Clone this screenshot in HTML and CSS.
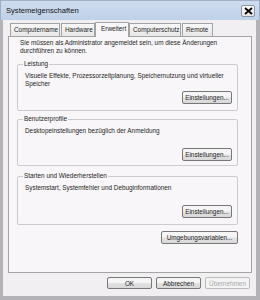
FILE: index.html
```html
<!DOCTYPE html>
<html lang="de">

<head>
    <meta charset="UTF-8">
    <title>Systemeigenschaften</title>
    <link rel="stylesheet" href="styles.css">
</head>

<body>
    <div class="window">
        <div class="titlebar">
            <span class="title">Systemeigenschaften</span>
            <span class="close">
                <svg width="9" height="8" viewBox="0 0 9 8">
                    <path d="M1 1 L8 7 M8 1 L1 7" stroke="#000" stroke-width="1.8" fill="none" />
                </svg>
            </span>
        </div>

        <div class="content">
            <ul class="tabs">
                <li class="t1">Computername</li>
                <li class="t2">Hardware</li>
                <li class="t3 current">Erweitert</li>
                <li class="t4">Computerschutz</li>
                <li class="t5">Remote</li>
            </ul>

            <div class="panel">
                <p class="intro">Sie müssen als Administrator angemeldet sein, um diese Änderungen<br>durchführen zu können.</p>

                <fieldset class="group perf">
                    <legend>Leistung</legend>
                    <p>Visuelle Effekte, Prozessorzeitplanung, Speichernutzung und virtueller<br>Speicher</p>
                    <div class="row"><button>Einstellungen...</button></div>
                </fieldset>

                <fieldset class="group profile">
                    <legend>Benutzerprofile</legend>
                    <p>Desktopeinstellungen bezüglich der Anmeldung</p>
                    <div class="row"><button>Einstellungen...</button></div>
                </fieldset>

                <fieldset class="group start">
                    <legend>Starten und Wiederherstellen</legend>
                    <p>Systemstart, Systemfehler und Debuginformationen</p>
                    <div class="row"><button>Einstellungen...</button></div>
                </fieldset>

                <div class="env"><button>Umgebungsvariablen...</button></div>
            </div>

            <div class="actions">
                <button>OK</button>
                <button>Abbrechen</button>
                <button disabled>Übernehmen</button>
            </div>
        </div>
    </div>
</body>

</html>
```

FILE: styles.css
```css
* {
    margin: 0;
    padding: 0;
    box-sizing: border-box;
}

ul {
    list-style: none;
}

body {
    width: 260px;
    height: 300px;
    font-family: "Liberation Sans", Arial, sans-serif;
    font-size: 6.4px;
    color: #1e1e1e;
    background: #b3b3b7;
}

.window {
    width: 260px;
    height: 300px;
    display: flex;
    flex-direction: column;
    background: #b3b3b7;
}

.titlebar {
    height: 20px;
    display: flex;
    align-items: center;
    justify-content: space-between;
    padding: 0 4px 0 5px;
    background: linear-gradient(#cfdcee, #bfd1e8);
    border: 1px solid #9fb0c6;
    border-bottom: none;
}

.title {
    font-size: 7.6px;
    color: #111;
}

.close {
    width: 14px;
    height: 12px;
    display: flex;
    align-items: center;
    justify-content: center;
    background: linear-gradient(#fbfbfb, #e4e6ea);
    border: 1px solid #8895a6;
    border-radius: 2px;
}

.content {
    flex: 1;
    margin: 0 4px 4px 3px;
    padding: 2px 4px 0 5px;
    background: #f1eff1;
    display: flex;
    flex-direction: column;
}

.tabs {
    display: flex;
    height: 14px;
    align-items: flex-end;
    padding-left: 2px;
    position: relative;
    z-index: 1;
}

.tabs li {
    height: 13px;
    line-height: 12px;
    padding: 0 3px;
    border: 1px solid #a3a3a3;
    border-bottom: none;
    background: linear-gradient(#f7f7f7, #e8e8e8);
    margin-right: 1px;
    white-space: nowrap;
}

.tabs .t1 {
    width: 50px;
}

.tabs .t2 {
    width: 34px;
}

.tabs .t3 {
    width: 34px;
}

.tabs .t4 {
    width: 52px;
}

.tabs .t5 {
    width: 31px;
}

.tabs .current {
    height: 15px;
    line-height: 12px;
    margin: 0 0 -1px -1px;
    background: #f8f6f8;
    padding-left: 5px;
}

.panel {
    height: 237px;
    border: 1px solid #a4a4a4;
    background: #f8f6f8;
    padding: 2px 13px 0 8px;
}

.intro {
    line-height: 8px;
    padding-left: 3px;
    margin-bottom: 5px;
}

.group {
    border: 1px solid #cdcacd;
    border-radius: 2px;
    padding: 0 5px 0 7px;
}

.group legend {
    padding: 0 1px;
    margin-left: -2px;
    line-height: 8px;
}

.group p {
    line-height: 8px;
    margin-top: 4px;
}

.group .row {
    display: flex;
    justify-content: flex-end;
}

.perf {
    margin-bottom: 4px;
}

.perf .row {
    margin: 3px 0 6px;
}

.profile {
    margin-bottom: 6px;
}

.profile .row {
    margin: 13px 0 4px;
}

.start .row {
    margin: 13px 0 6px;
}

button {
    font-family: "Liberation Sans", Arial, sans-serif;
    font-size: 6.4px;
    color: #1e1e1e;
    height: 13px;
    border: 1px solid #777;
    border-radius: 2px;
    background: linear-gradient(#f5f5f5 45%, #e1e1e1 55%, #d9d9d9);
}

.group button {
    width: 50px;
}

.env {
    display: flex;
    justify-content: flex-end;
    margin-top: 6px;
}

.env button {
    width: 77px;
}

.actions {
    display: flex;
    justify-content: flex-end;
    gap: 4px;
    padding: 4px 2px 0 0;
}

.actions button {
    width: 45px;
    height: 12px;
}

.actions button:disabled {
    color: #a8a8a8;
    border-color: #bcbcbc;
    background: #f4f4f4;
}
```
